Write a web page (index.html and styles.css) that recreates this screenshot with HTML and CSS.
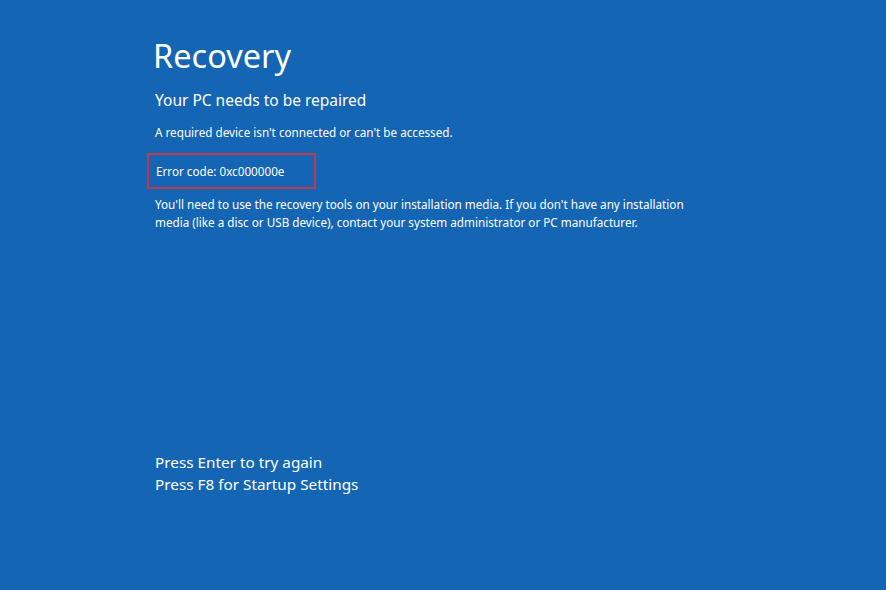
FILE: index.html
```html
<!DOCTYPE html>
<html lang="en">
<head>
  <meta charset="utf-8" />
  <title>Recovery</title>
  <link rel="stylesheet" href="styles.css">
</head>
<body>
  <div class="screen">
    <div class="content">
      <div class="title">Recovery</div>
      <div class="subtitle">Your PC needs to be repaired</div>
      <p class="msg">A required device isn't connected or can't be accessed.</p>
      <div class="error-box">Error code: 0xc000000e</div>
      <p class="msg long">You'll need to use the recovery tools on your installation media. If you don't have any installation media (like a disc or USB device), contact your system administrator or PC manufacturer.</p>
    </div>

    <div class="keys">
      <div>Press Enter to try again</div>
      <div>Press F8 for Startup Settings</div>
    </div>
  </div>
</body>
</html>
```

FILE: styles.css
```css
body {
  margin: 0;
  background-color: #1465b4;
  font-family: "Noto Sans", "Open Sans", sans-serif;
  color: #fff;
}

.screen {
  height: 590px;
  padding-left: 155px;
  box-sizing: border-box;
  display: flex;
  flex-direction: column;
}

.content {
  padding-top: 36px;
}

.title {
  font-size: 32.5px;
  margin-left: -2px;
  line-height: 40px;
}

.subtitle {
  font-size: 15.5px;
  line-height: 20px;
  margin-top: 14px;
}

.msg {
  font-size: 11.7px;
  line-height: 18px;
  margin: 13px 0 0;
}

.error-box {
  font-size: 11.7px;
  line-height: 18px;
  width: 158px;
  margin: 12px 0 0 -8px;
  padding: 7px 0 7px 7px;
  border: 2px solid #c2384a;
}

.long {
  width: 540px;
  margin-top: 6px;
}

.keys {
  margin-top: auto;
  margin-bottom: 95px;
  font-size: 15.3px;
  line-height: 22px;
}
```
